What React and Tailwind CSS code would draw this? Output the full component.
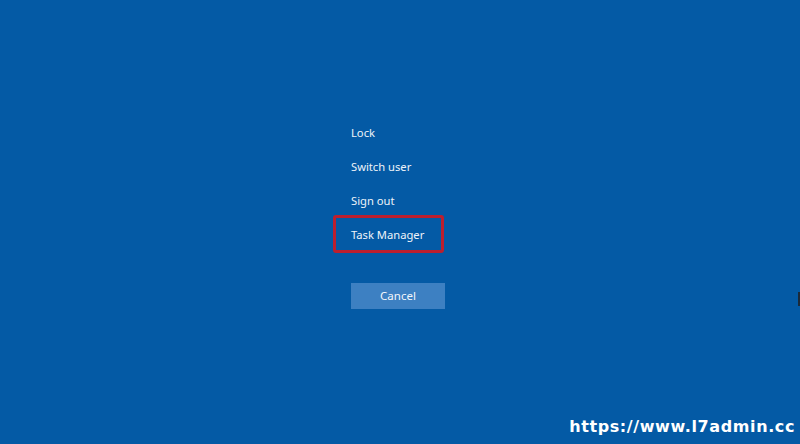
export default function App() {
  const items = ['Lock', 'Switch user', 'Sign out']

  return (
    <div
      className="relative w-full h-[444px] overflow-hidden bg-[#045aa5] text-[#eef3f9]"
      style={{ fontFamily: '"Noto Sans", "Open Sans", sans-serif' }}
    >
      <div className="flex flex-col pl-[351px] pt-[116px]">
        {items.map((label) => (
          <div key={label} className="h-[34px] flex items-center text-[11.2px]">
            {label}
          </div>
        ))}
        {/* highlighted option */}
        <div className="relative h-[34px] flex items-center text-[11.2px]">
          Task Manager
          <span className="absolute left-[-18px] top-[-3px] w-[111px] h-[38px] rounded-[3px] border-[3px] border-[#bd1f2e]" />
        </div>
        <button className="mt-[31px] w-[94px] h-[26px] bg-[#3d80c2] text-[11.5px] text-[#f2f6fb]">
          Cancel
        </button>
      </div>

      {/* watermark */}
      <div
        className="absolute right-[5px] bottom-[5px] text-[16px] font-bold tracking-[0.6px] text-white"
        style={{ fontFamily: '"DejaVu Sans", sans-serif' }}
      >
        https://www.l7admin.cc
      </div>

      <div className="absolute right-0 top-[292px] w-[2px] h-[14px] bg-[#1b2a3a]" />
    </div>
  )
}
